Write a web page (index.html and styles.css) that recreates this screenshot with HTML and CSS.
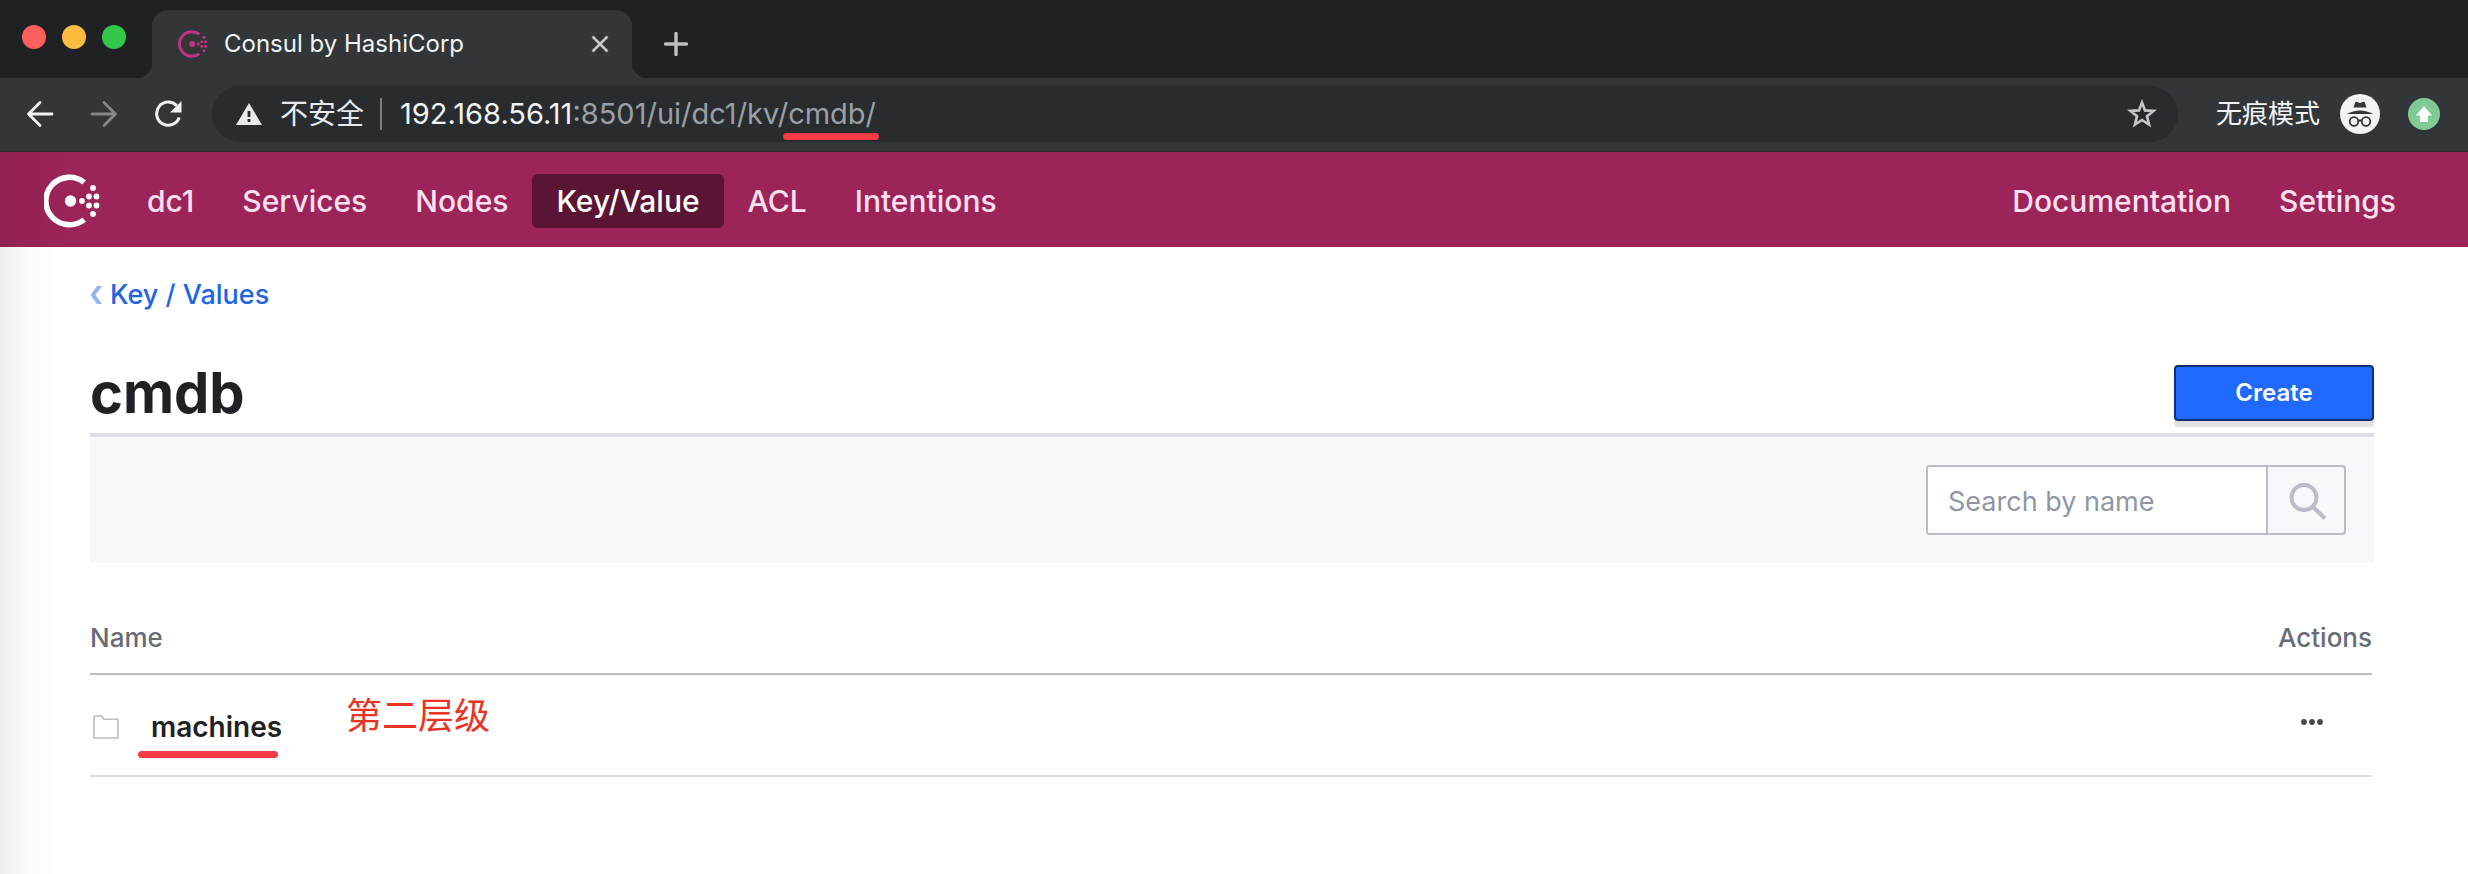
FILE: index.html
```html
<!DOCTYPE html>
<html lang="en">
<head>
<meta charset="utf-8">
<title>Consul by HashiCorp</title>
<link rel="stylesheet" href="styles.css">
</head>
<body>
<svg class="sprite" aria-hidden="true">
  <symbol id="consul" viewBox="0 0 56 54">
    <path class="logo-ring" d="M40.2 8.4A23.7 23.7 0 1 0 40.2 45.6"/>
    <circle class="logo-core" cx="26.5" cy="27" r="5.7"/>
    <g class="logo-dots">
      <circle cx="38" cy="27" r="2.9"/>
      <circle cx="45" cy="22.5" r="2.9"/><circle cx="45" cy="31.5" r="2.9"/>
      <circle cx="52.5" cy="22.5" r="2.9"/><circle cx="52.5" cy="31.5" r="2.9"/>
      <circle cx="49" cy="14" r="2.9"/><circle cx="49" cy="40" r="2.9"/>
    </g>
  </symbol>
</svg>

<div class="browser">
  <div class="tab-strip">
    <div class="lights">
      <button class="light light-close" aria-label="Close window"></button>
      <button class="light light-min" aria-label="Minimise window"></button>
      <button class="light light-max" aria-label="Zoom window"></button>
    </div>
    <div class="tab">
      <svg class="favicon"><use href="#consul"/></svg>
      <span class="tab-title">Consul by HashiCorp</span>
      <button class="icon-button" aria-label="Close tab">
        <svg width="20" height="20" viewBox="0 0 20 20"><path d="M2.500 2.500L17.500 17.500M17.500 2.500L2.500 17.500" stroke="#c6c8ca" stroke-width="2.600"/></svg>
      </button>
    </div>
    <button class="icon-button new-tab" aria-label="New tab">
      <svg width="24" height="24" viewBox="0 0 24 24"><path d="M12 1.500V22.500M1.500 12H22.500" stroke="#bdbfc2" stroke-width="3.400" stroke-linecap="round"/></svg>
    </button>
  </div>
  <div class="toolbar">
    <div class="history">
      <button class="icon-button" aria-label="Back">
        <svg width="28" height="28" viewBox="0 0 28 28" fill="none" stroke="#f1f3f4" stroke-width="2.800" stroke-linecap="round" stroke-linejoin="round"><path d="M26 14H2.500M14 2.500L2.500 14L14 25.500"/></svg>
      </button>
      <button class="icon-button" aria-label="Forward">
        <svg width="28" height="28" viewBox="0 0 28 28" fill="none" stroke="#84878a" stroke-width="2.800" stroke-linecap="round" stroke-linejoin="round"><path d="M2 14H25.500M14 2.500L25.500 14L14 25.500"/></svg>
      </button>
      <button class="icon-button" aria-label="Reload">
        <svg width="28" height="28" viewBox="0 0 28 28"><path d="M22.600 5.600A11.600 11.600 0 1 0 25.200 17.500" fill="none" stroke="#f1f3f4" stroke-width="3"/><path d="M27.500 1V12.500H16Z" fill="#f1f3f4"/></svg>
      </button>
    </div>
    <div class="address">
      <svg width="26" height="22" viewBox="0 0 26 22"><path d="M13 0L26 22H0Z" fill="#e8eaed"/><path d="M11.600 8H14.400V14H11.600ZM11.600 16H14.400V19H11.600Z" fill="#292c2f"/></svg>
      <span class="security">不安全</span>
      <span class="url"><b>192.168.56.11</b>:8501/ui/dc1/kv<span class="url-mark">/cmdb/</span></span>
      <button class="icon-button" aria-label="Bookmark this page">
        <svg width="30" height="30" viewBox="0 0 30 30"><path d="M15 3.500L18 11.400L26.600 11.900L20 17.300L22.100 25.600L15 21L7.900 25.600L10 17.300L3.400 11.900L12 11.400Z" fill="none" stroke="#c4c7ca" stroke-width="2.600"/></svg>
      </button>
    </div>
    <span class="incognito">无痕模式</span>
    <svg class="incognito-icon" width="40" height="40" viewBox="0 0 40 40">
      <circle cx="20" cy="20" r="20" fill="#f1f3f4"/>
      <path d="M13.500 13.500L15.200 8.400Q15.600 7.500 16.500 7.800L20 9L23.500 7.800Q24.400 7.500 24.800 8.400L26.500 13.500ZM7 20Q13 16.400 20 16.400Q27 16.400 33 20Z" fill="#323639"/>
      <g fill="none" stroke="#323639" stroke-width="1.800"><circle cx="14" cy="27.500" r="4.300"/><circle cx="26" cy="27.500" r="4.300"/><path d="M18.300 27Q20 25.800 21.700 27"/></g>
    </svg>
    <button class="icon-button" aria-label="Update">
      <svg width="32" height="32" viewBox="0 0 32 32"><circle cx="16" cy="16" r="16" fill="#81c995"/><path d="M16 8L24 17.500H20V24H12V17.500H8Z" fill="#fff"/></svg>
    </button>
  </div>
</div>

<header class="site-header">
  <a class="brand" href="#" aria-label="Consul"><svg class="logo"><use href="#consul"/></svg></a>
  <nav class="nav nav-main">
    <a href="#">dc1</a>
    <a href="#">Services</a>
    <a href="#">Nodes</a>
    <a href="#" class="is-active" aria-current="page">Key/Value</a>
    <a href="#">ACL</a>
    <a href="#">Intentions</a>
  </nav>
  <nav class="nav">
    <a href="#">Documentation</a>
    <a href="#">Settings</a>
  </nav>
</header>

<main class="content">
  <a class="breadcrumb" href="#">
    <svg width="12" height="18" viewBox="0 0 12 18"><path d="M7 0H12L5.500 9L12 18H7L0.500 9Z" fill="#93b3f5"/></svg>
    <span>Key / Values</span>
  </a>
  <div class="title-row">
    <h1>cmdb</h1>
    <button class="create">Create</button>
  </div>
  <form class="filter">
    <div class="search">
      <input type="text" aria-label="Search by name" placeholder="Search by name">
      <button type="button" class="search-button" aria-label="Search">
        <svg width="38" height="38" viewBox="0 0 38 38" fill="none" stroke="#babdc7" stroke-width="4"><circle cx="15" cy="15.500" r="12.500"/><path d="M24 25L36 36.500"/></svg>
      </button>
    </div>
  </form>
  <table class="entries">
    <thead>
      <tr><th scope="col">Name</th><th scope="col" class="actions">Actions</th></tr>
    </thead>
    <tbody>
      <tr>
        <td>
          <div class="entry">
            <svg width="26" height="24" viewBox="0 0 26 24"><path d="M1 23V1H8.500L11 4.200H25V23Z" fill="none" stroke="#b9bec7" stroke-width="1.600" stroke-linejoin="round"/></svg>
            <a href="#">machines</a>
            <span class="note">第二层级</span>
          </div>
        </td>
        <td class="actions">
          <button class="icon-button more" aria-label="More actions">
            <svg width="22" height="6" viewBox="0 0 22 6" fill="#4a4a4c"><circle cx="3" cy="3" r="2.900"/><circle cx="11" cy="3" r="2.900"/><circle cx="19" cy="3" r="2.900"/></svg>
          </button>
        </td>
      </tr>
    </tbody>
  </table>
</main>
</body>
</html>
```
FILE: styles.css
```css
* { box-sizing: border-box; }

/* Soft shade along the left edge of the window */
html {
  background: #fff linear-gradient(90deg, rgba(0, 0, 0, .065), rgba(0, 0, 0, .012) 45%, transparent) 0 0 / 72px 100% repeat-y;
}

body {
  margin: 0;
  color: #1f2124;
  font-family: Inter, "Noto Sans CJK SC", sans-serif;
  font-size: 28px;
  line-height: 36px;
}

a { color: inherit; text-decoration: none; }
button, input { font: inherit; margin: 0; }
svg { display: block; flex: none; }
.sprite { position: absolute; width: 0; height: 0; }

.logo-ring { fill: none; stroke: currentColor; stroke-width: 5.6; }
.logo-core, .logo-dots { fill: currentColor; }

.icon-button {
  display: flex;
  align-items: center;
  justify-content: center;
  padding: 0;
  border: 0;
  background: none;
  flex: none;
}

/* Browser window frame */
.tab-strip {
  display: flex;
  align-items: flex-end;
  height: 78px;
  background: #202124;
}

.lights { display: flex; gap: 16px; padding: 0 26px 29px 22px; }
.light { width: 24px; height: 24px; padding: 0; border: 0; border-radius: 50%; }
.light-close { background: #fc605c; }
.light-min { background: #fdbc40; }
.light-max { background: #34c84a; }

.tab {
  position: relative;
  display: flex;
  align-items: center;
  gap: 16px;
  width: 480px;
  height: 68px;
  padding: 0 22px 0 26px;
  border-radius: 16px 16px 0 0;
  background: #323639;
  color: #f1f3f4;
  font-size: 24px;
}

.tab::before, .tab::after {
  content: "";
  position: absolute;
  bottom: 0;
  width: 16px;
  height: 16px;
}
.tab::before { right: 100%; background: radial-gradient(circle at 0 0, #202124 16px, #323639 17px); }
.tab::after { left: 100%; background: radial-gradient(circle at 100% 0, #202124 16px, #323639 17px); }

.favicon { width: 30px; height: 28px; color: #c03480; }
.tab-title { flex: 1; white-space: nowrap; }
.new-tab { margin: 0 0 22px 32px; }

.toolbar {
  display: flex;
  align-items: center;
  height: 74px;
  padding: 0 28px 2px 26px;
  border-bottom: 1px solid #292b2e;
  background: #323639;
}

.history { display: flex; gap: 36px; margin-right: 30px; }

.address {
  display: flex;
  flex: 1;
  align-items: center;
  height: 56px;
  margin-right: 38px;
  padding: 0 21px 0 24px;
  border-radius: 28px;
  background: #292c2f;
  color: #9aa0a6;
}

.security {
  margin: 0 18px;
  padding-right: 16px;
  border-right: 2px solid #7c7f82;
  color: #e8eaed;
  line-height: 32px;
}

.url { flex: 1; font-size: 29px; white-space: nowrap; }
.url b { color: #f1f3f4; font-weight: 400; }
.url-mark { position: relative; }
.url-mark::after {
  content: "";
  position: absolute;
  right: -3px;
  bottom: -9px;
  left: 5px;
  height: 7px;
  border-radius: 4px;
  background: #f63b45;
}

.incognito { color: #f1f3f4; font-size: 26px; }
.incognito-icon { margin: 0 28px 0 20px; }

/* Site header */
.site-header {
  display: flex;
  align-items: center;
  height: 95px;
  padding: 3px 48px 0 44px;
  background: #9c2458 linear-gradient(90deg, rgba(0, 0, 0, .07), transparent) 0 0 / 72px 100% no-repeat;
  color: #ffe0f0;
}

.brand { margin-right: 23px; color: #fff; }
.logo { width: 56px; height: 54px; }

.nav { display: flex; }
.nav-main { flex: 1; }
.nav a {
  padding: 9px 24px;
  border-radius: 6px;
  font-size: 30px;
  font-weight: 500;
}
.nav .is-active { background: #5a1434; color: #fff; }

/* Key/value listing */
.content { padding: 29px 94px 0 90px; }

.breadcrumb {
  display: inline-flex;
  align-items: center;
  gap: 8px;
  color: #2264e6;
  font-size: 27px;
  font-weight: 500;
}

.title-row {
  display: flex;
  align-items: center;
  justify-content: space-between;
  margin-top: 40px;
  border-bottom: 4px solid #dce0e6;
}

h1 {
  margin: 0;
  font-size: 56px;
  font-weight: 700;
  line-height: 80px;
}

.create {
  width: 200px;
  height: 56px;
  border: 2px solid #0f2f75;
  border-radius: 4px;
  background: #1f69ff;
  box-shadow: 0 6px 2px rgba(0, 0, 0, .12);
  color: #fff;
  font-size: 24px;
  font-weight: 600;
  line-height: 32px;
}

.filter {
  display: flex;
  justify-content: flex-end;
  padding: 28px;
  background: #f7f8fa;
}

.search {
  display: flex;
  width: 420px;
  height: 70px;
  overflow: hidden;
  border: 2px solid #babdc9;
  border-radius: 4px;
}

.search input {
  flex: 1;
  min-width: 0;
  padding: 4px 20px 0;
  border: 0;
  outline: 0;
  background: #fff;
  font-size: 27px;
}
.search input::placeholder { color: #9097a3; opacity: 1; }

.search-button {
  display: flex;
  align-items: center;
  justify-content: center;
  width: 78px;
  padding: 2px 0 0 4px;
  border: 0;
  border-left: 2px solid #babdc9;
  background: none;
}

.entries {
  width: calc(100% - 2px);
  margin-top: 48px;
  border-collapse: collapse;
}

.entries th {
  height: 63px;
  padding: 0 0 9px;
  border-bottom: 2px solid #bbbccb;
  color: #686c75;
  font-size: 26px;
  font-weight: 500;
  text-align: left;
}
.entries td {
  height: 102px;
  padding: 0;
  border-bottom: 2px solid #dcdee3;
}
.entries .actions { width: 120px; text-align: right; }

.entry {
  position: relative;
  display: flex;
  align-items: center;
  gap: 32px;
  padding: 3px 3px 0;
}
.entry a { position: relative; font-weight: 600; }
.entry a::after {
  content: "";
  position: absolute;
  right: 4px;
  bottom: -13px;
  left: -13px;
  height: 7px;
  border-radius: 4px;
  background: #f63b45;
}

.note {
  position: absolute;
  bottom: 11px;
  left: 256px;
  color: #ea3323;
  font-size: 36px;
  white-space: nowrap;
}

.more { margin: 0 49px 6px auto; }
```
